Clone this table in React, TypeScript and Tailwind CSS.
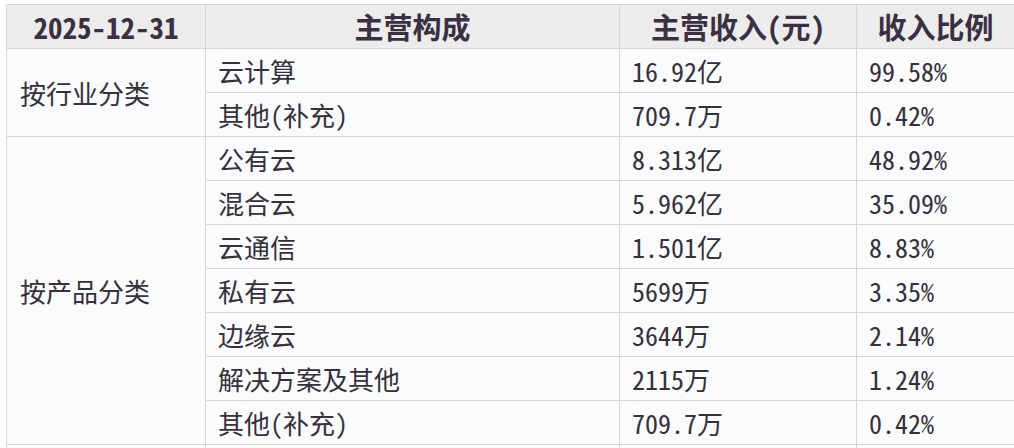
import React from "react";

const rows1 = [
  ["云计算", "16.92亿", "99.58%"],
  ["其他(补充)", "709.7万", "0.42%"],
];
const rows2 = [
  ["公有云", "8.313亿", "48.92%"],
  ["混合云", "5.962亿", "35.09%"],
  ["云通信", "1.501亿", "8.83%"],
  ["私有云", "5699万", "3.35%"],
  ["边缘云", "3644万", "2.14%"],
  ["解决方案及其他", "2115万", "1.24%"],
  ["其他(补充)", "709.7万", "0.42%"],
];

const font = {
  fontFamily: '"Noto Sans Mono CJK SC", "Noto Sans CJK SC", "Liberation Mono", monospace',
};

const td = "border border-[#d6d6d6] h-[44px] px-[12px] py-0 align-middle text-left";

export default function App() {
  return (
    <div className="w-[1014px] h-[448px] overflow-hidden bg-white pt-[4px] pl-[6px]" style={font}>
      <table className="border-collapse table-fixed w-[1008px] text-[#35303a] text-[26px] leading-none">
        <colgroup>
          <col className="w-[199px]" />
          <col className="w-[414px]" />
          <col className="w-[237px]" />
          <col className="w-[158px]" />
        </colgroup>
        <thead>
          <tr className="bg-[#ececec]">
            {["2025-12-31", "主营构成", "主营收入(元)", "收入比例"].map((h) => (
              <th key={h} className="border border-[#d6d6d6] h-[44px] p-0 text-center font-bold text-[29px] text-[#3a3042]">
                {h}
              </th>
            ))}
          </tr>
        </thead>
        <tbody className="bg-[#f9fbfd]">
          {rows1.map((r, i) => (
            <tr key={"a" + i}>
              {i === 0 && (
                <td rowSpan={2} className={td + " pl-[13px]"}>
                  按行业分类
                </td>
              )}
              <td className={td}>{r[0]}</td>
              <td className={td}>{r[1]}</td>
              <td className={td}>{r[2]}</td>
            </tr>
          ))}
          {rows2.map((r, i) => (
            <tr key={"b" + i}>
              {i === 0 && (
                <td rowSpan={7} className={td + " pl-[13px]"}>
                  按产品分类
                </td>
              )}
              <td className={td}>{r[0]}</td>
              <td className={td}>{r[1]}</td>
              <td className={td}>{r[2]}</td>
            </tr>
          ))}
          <tr>
            <td className={td}>&nbsp;</td>
            <td className={td}>&nbsp;</td>
            <td className={td}>&nbsp;</td>
            <td className={td}>&nbsp;</td>
          </tr>
        </tbody>
      </table>
    </div>
  );
}
